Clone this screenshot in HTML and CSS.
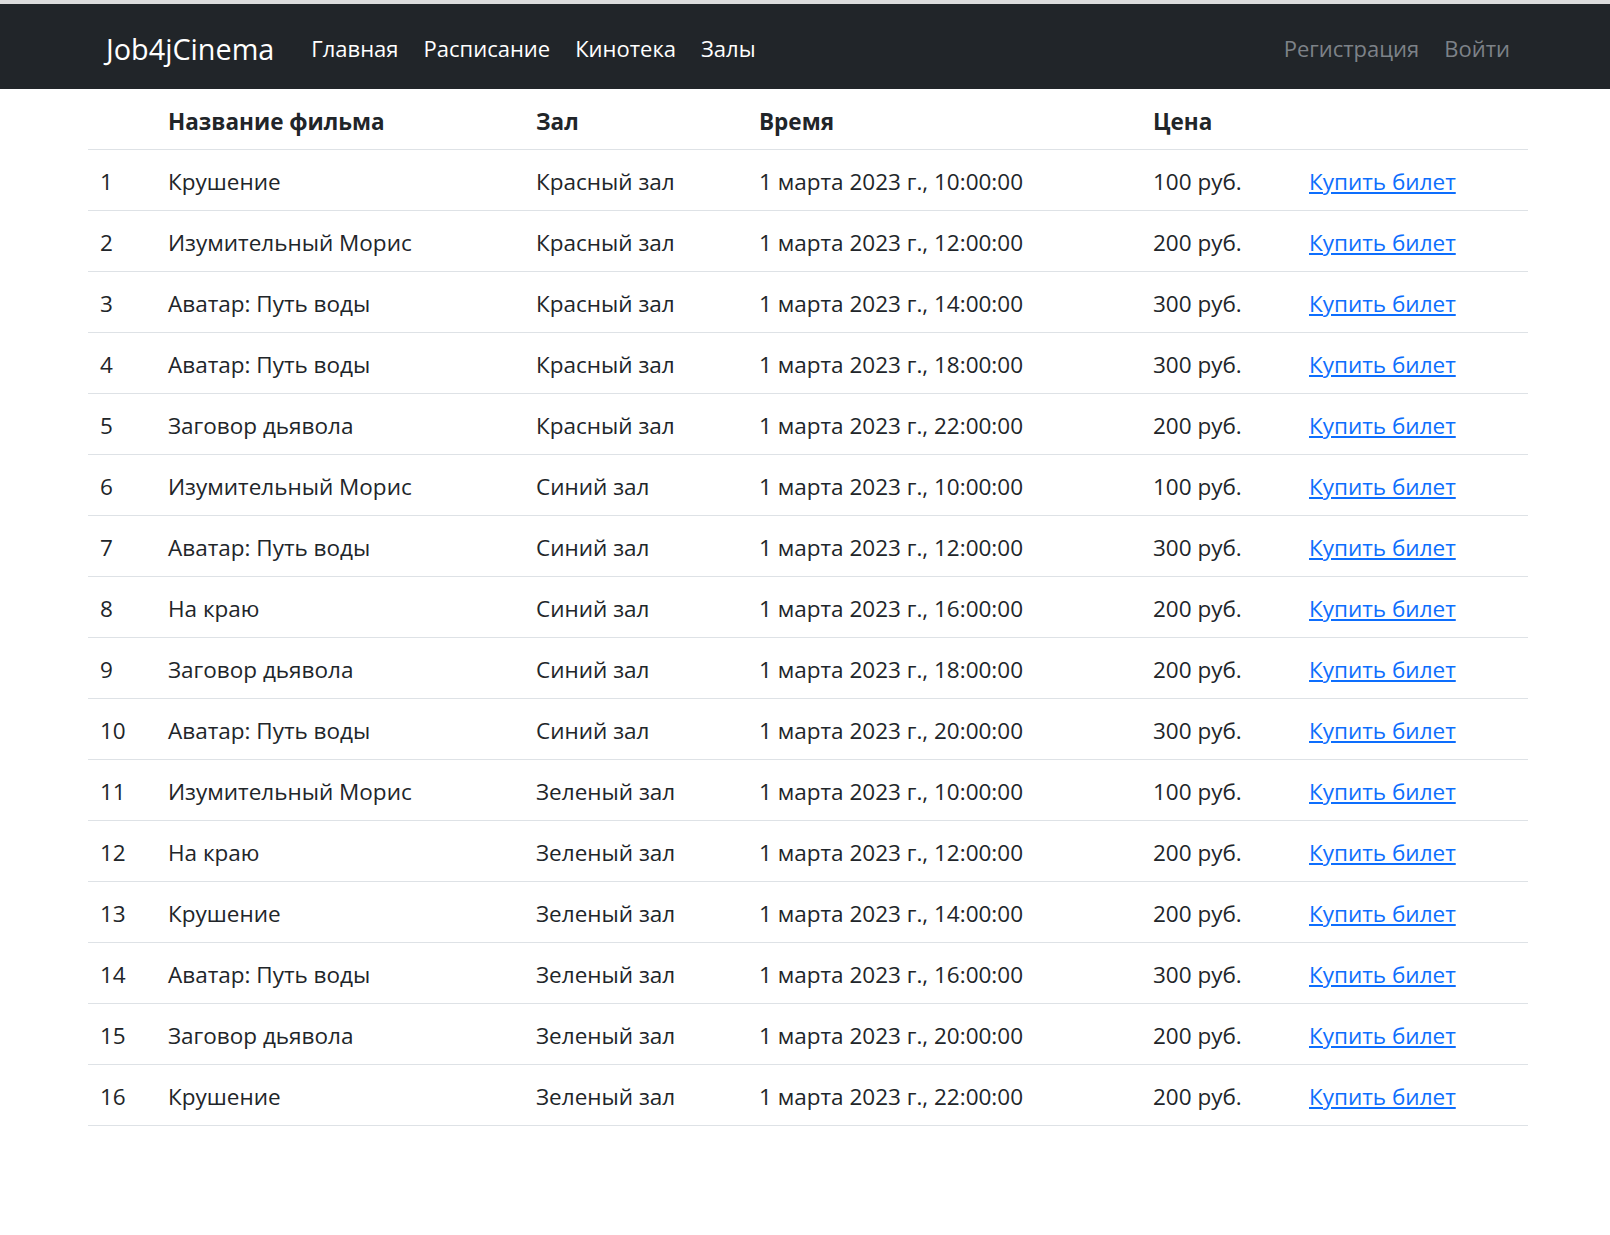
FILE: index.html
```html
<!DOCTYPE html>
<html lang="ru">
<head>
<meta charset="utf-8">
<title>Job4jCinema</title>
<link rel="stylesheet" href="styles.css">
</head>
<body>
<div class="topstrip"></div>
<nav class="navbar">
  <div class="nav-inner">
    <a class="brand" href="#">Job4jCinema</a>
    <ul class="nav-main">
      <li><a href="#">Главная</a></li>
      <li><a href="#">Расписание</a></li>
      <li><a href="#">Кинотека</a></li>
      <li><a href="#">Залы</a></li>
    </ul>
    <ul class="nav-auth">
      <li><a href="#">Регистрация</a></li>
      <li><a href="#">Войти</a></li>
    </ul>
  </div>
</nav>
<main class="container">
  <table class="sessions">
    <thead>
      <tr><th class="c-num"></th><th class="c-name">Название фильма</th><th class="c-hall">Зал</th><th class="c-time">Время</th><th class="c-price">Цена</th><th class="c-act"></th></tr>
    </thead>
    <tbody>
      <tr><td>1</td><td>Крушение</td><td>Красный зал</td><td>1 марта 2023 г., 10:00:00</td><td>100 руб.</td><td><a href="#">Купить билет</a></td></tr>
      <tr><td>2</td><td>Изумительный Морис</td><td>Красный зал</td><td>1 марта 2023 г., 12:00:00</td><td>200 руб.</td><td><a href="#">Купить билет</a></td></tr>
      <tr><td>3</td><td>Аватар: Путь воды</td><td>Красный зал</td><td>1 марта 2023 г., 14:00:00</td><td>300 руб.</td><td><a href="#">Купить билет</a></td></tr>
      <tr><td>4</td><td>Аватар: Путь воды</td><td>Красный зал</td><td>1 марта 2023 г., 18:00:00</td><td>300 руб.</td><td><a href="#">Купить билет</a></td></tr>
      <tr><td>5</td><td>Заговор дьявола</td><td>Красный зал</td><td>1 марта 2023 г., 22:00:00</td><td>200 руб.</td><td><a href="#">Купить билет</a></td></tr>
      <tr><td>6</td><td>Изумительный Морис</td><td>Синий зал</td><td>1 марта 2023 г., 10:00:00</td><td>100 руб.</td><td><a href="#">Купить билет</a></td></tr>
      <tr><td>7</td><td>Аватар: Путь воды</td><td>Синий зал</td><td>1 марта 2023 г., 12:00:00</td><td>300 руб.</td><td><a href="#">Купить билет</a></td></tr>
      <tr><td>8</td><td>На краю</td><td>Синий зал</td><td>1 марта 2023 г., 16:00:00</td><td>200 руб.</td><td><a href="#">Купить билет</a></td></tr>
      <tr><td>9</td><td>Заговор дьявола</td><td>Синий зал</td><td>1 марта 2023 г., 18:00:00</td><td>200 руб.</td><td><a href="#">Купить билет</a></td></tr>
      <tr><td>10</td><td>Аватар: Путь воды</td><td>Синий зал</td><td>1 марта 2023 г., 20:00:00</td><td>300 руб.</td><td><a href="#">Купить билет</a></td></tr>
      <tr><td>11</td><td>Изумительный Морис</td><td>Зеленый зал</td><td>1 марта 2023 г., 10:00:00</td><td>100 руб.</td><td><a href="#">Купить билет</a></td></tr>
      <tr><td>12</td><td>На краю</td><td>Зеленый зал</td><td>1 марта 2023 г., 12:00:00</td><td>200 руб.</td><td><a href="#">Купить билет</a></td></tr>
      <tr><td>13</td><td>Крушение</td><td>Зеленый зал</td><td>1 марта 2023 г., 14:00:00</td><td>200 руб.</td><td><a href="#">Купить билет</a></td></tr>
      <tr><td>14</td><td>Аватар: Путь воды</td><td>Зеленый зал</td><td>1 марта 2023 г., 16:00:00</td><td>300 руб.</td><td><a href="#">Купить билет</a></td></tr>
      <tr><td>15</td><td>Заговор дьявола</td><td>Зеленый зал</td><td>1 марта 2023 г., 20:00:00</td><td>200 руб.</td><td><a href="#">Купить билет</a></td></tr>
      <tr><td>16</td><td>Крушение</td><td>Зеленый зал</td><td>1 марта 2023 г., 22:00:00</td><td>200 руб.</td><td><a href="#">Купить билет</a></td></tr>
    </tbody>
  </table>
</main>
</body>
</html>
```
FILE: styles.css
```css
* { box-sizing: border-box; }
html, body { margin: 0; padding: 0; background: #fff; }
body {
  font-family: "Open Sans", "Noto Sans", "DejaVu Sans", sans-serif;
  color: #212529;
  font-size: 22.5px;
  line-height: 34px;
}
.topstrip { height: 4px; background: #dcdcdc; }
.navbar { background: #212529; height: 85px; }
.nav-inner {
  margin-left: 88px;
  width: 1440px;
  height: 100%;
  padding: 4px 18px 0;
  display: flex;
  align-items: center;
}
.navbar a { text-decoration: none; }
.brand { color: #fff; font-size: 28.8px; margin-right: 37px; }
.nav-main, .nav-auth { list-style: none; margin: 0; padding: 0; display: flex; gap: 25px; }
.nav-main a { color: #fff; font-size: 22px; }
.nav-auth { margin-left: auto; }
.nav-auth a { color: #7d8288; font-size: 22px; }
.container { margin-left: 88px; width: 1440px; }
.sessions { width: 100%; border-collapse: collapse; table-layout: fixed; }
.sessions th, .sessions td {
  text-align: left;
  padding: 15px 12px 11px;
  border-bottom: 1px solid #dee2e6;
  vertical-align: middle;
  white-space: nowrap;
}
.sessions th { font-weight: 700; padding-top: 16px; padding-bottom: 10px; }
.c-num { width: 68px; }
.c-name { width: 368px; }
.c-hall { width: 223px; }
.c-time { width: 394px; }
.c-price { width: 156px; }
.c-act { width: 231px; }
.sessions a { color: #0d6efd; text-decoration: underline; }
```
